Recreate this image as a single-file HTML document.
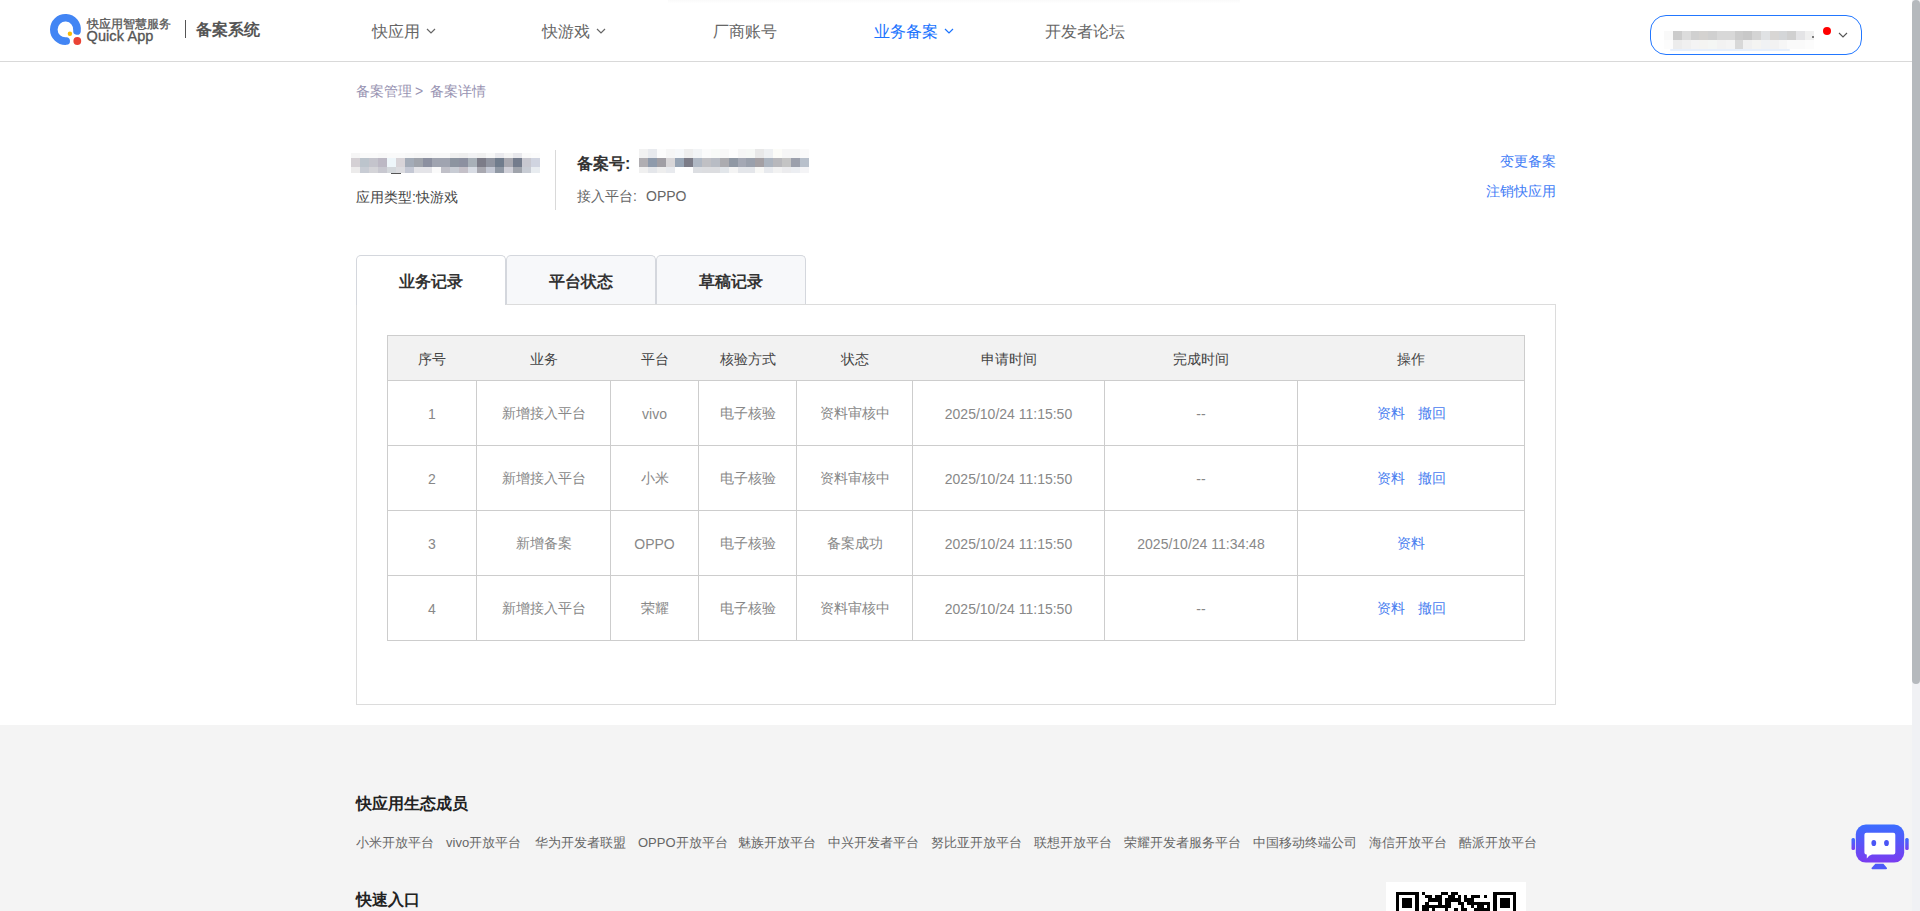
<!DOCTYPE html>
<html><head><meta charset="utf-8">
<style>
html,body{margin:0;padding:0;width:1920px;height:911px;overflow:hidden;background:#fff;font-family:"Liberation Sans",sans-serif;}
.a{position:absolute;white-space:nowrap;}
#hdr{position:absolute;left:0;top:0;width:1912px;height:61px;background:#fff;border-bottom:1px solid #d9d9d9;}
.nav{position:absolute;top:24px;font-size:16px;line-height:16px;color:#666;white-space:nowrap;}
.chev{position:absolute;}
.bc{font-size:14px;line-height:14px;color:#9893b2;}
.blk{position:absolute;}
.tab{position:absolute;top:255px;width:148px;height:48px;border:1px solid #d4d7dd;border-bottom:none;border-radius:5px 5px 0 0;background:#f7f8fa;font-size:16px;font-weight:bold;color:#333;text-align:center;}
.tab span{position:absolute;left:0;right:0;top:18px;line-height:16px;}
#panel{position:absolute;left:356px;top:304px;width:1198px;height:399px;border:1px solid #dcdcdc;background:#fff;}
table{position:absolute;left:387px;top:335px;border-collapse:collapse;table-layout:fixed;font-size:14px;}
td,th{border:1px solid #cdcdcd;text-align:center;padding:0;white-space:nowrap;}
th{height:41px;padding-top:3px;background:#f2f2f2;font-weight:normal;color:#444;border-left:none;border-right:none;}
th:first-child{border-left:1px solid #cdcdcd;}
th:last-child{border-right:1px solid #cdcdcd;}
td{height:62px;padding-top:2px;color:#888;}
td a{color:#4a80f0;text-decoration:none;}
#footer{position:absolute;left:0;top:725px;width:1912px;height:186px;background:#f4f4f4;}
.ft{font-size:16px;line-height:16px;font-weight:bold;color:#222;}
.lk{font-size:13px;line-height:13px;color:#666;}
</style></head><body>

<div id="hdr"></div>
<div class="a" style="left:668px;top:0;width:572px;height:3px;background:linear-gradient(#fafafa,#fefefe)"></div>
<!-- logo -->
<svg class="a" style="left:45px;top:9px" width="42" height="42" viewBox="0 0 42 42">
  <path d="M 32.0 21.9 A 11.65 11.65 0 1 0 21.2 32.05" fill="none" stroke="#4285f4" stroke-width="7.6" stroke-linecap="round"/>
  <circle cx="24.9" cy="24.8" r="2.2" fill="#fbbc05"/>
  <circle cx="32.3" cy="32" r="3.9" fill="#ea4335"/>
</svg>
<div class="a" style="left:87px;top:18px;font-size:12px;line-height:12px;color:#555;-webkit-text-stroke:0.3px #555">快应用智慧服务</div>
<div class="a" style="left:86.5px;top:29px;font-size:14.5px;line-height:15px;color:#555;letter-spacing:0.1px;-webkit-text-stroke:0.35px #555">Quick App</div>
<div class="a" style="left:185px;top:20px;width:1px;height:18px;background:#555"></div>
<div class="a" style="left:196px;top:22px;font-size:16px;line-height:16px;font-weight:bold;color:#555">备案系统</div>

<div class="nav" style="left:372px">快应用</div>
<svg class="a" style="left:426px;top:28px" width="10" height="6" viewBox="0 0 10 6"><path d="M1 1 L5 5 L9 1" fill="none" stroke="#666" stroke-width="1.2"/></svg>
<div class="nav" style="left:542px">快游戏</div>
<svg class="a" style="left:596px;top:28px" width="10" height="6" viewBox="0 0 10 6"><path d="M1 1 L5 5 L9 1" fill="none" stroke="#666" stroke-width="1.2"/></svg>
<div class="nav" style="left:713px">厂商账号</div>
<div class="nav" style="left:874px;color:#1a73fe">业务备案</div>
<svg class="a" style="left:944px;top:28px" width="10" height="6" viewBox="0 0 10 6"><path d="M1 1 L5 5 L9 1" fill="none" stroke="#1a73fe" stroke-width="1.2"/></svg>
<div class="nav" style="left:1045px">开发者论坛</div>

<!-- user box -->
<div class="a" style="left:1650px;top:15px;width:210px;height:38px;border:1px solid #2277ff;border-radius:16px;background:#fff"></div>
<div class="a" style="left:1664.2px;top:31.0px;width:9.0px;height:9.1px;background:#f9f9f9"></div><div class="a" style="left:1673.0px;top:31.0px;width:9.0px;height:9.1px;background:#cccccc"></div><div class="a" style="left:1681.8px;top:31.0px;width:9.0px;height:9.1px;background:#dcdcdc"></div><div class="a" style="left:1690.6px;top:31.0px;width:9.0px;height:9.1px;background:#d0d0d0"></div><div class="a" style="left:1699.4px;top:31.0px;width:9.0px;height:9.1px;background:#d4d2d0"></div><div class="a" style="left:1708.2px;top:31.0px;width:9.0px;height:9.1px;background:#d0d0d0"></div><div class="a" style="left:1717.0px;top:31.0px;width:9.0px;height:9.1px;background:#d8d8d8"></div><div class="a" style="left:1725.8px;top:31.0px;width:9.0px;height:9.1px;background:#d8d8d8"></div><div class="a" style="left:1734.6px;top:31.0px;width:9.0px;height:9.1px;background:#cccccc"></div><div class="a" style="left:1743.4px;top:31.0px;width:9.0px;height:9.1px;background:#c8c8c8"></div><div class="a" style="left:1752.2px;top:31.0px;width:9.0px;height:9.1px;background:#d4d4d4"></div><div class="a" style="left:1761.0px;top:31.0px;width:9.0px;height:9.1px;background:#e0e2e4"></div><div class="a" style="left:1769.8px;top:31.0px;width:9.0px;height:9.1px;background:#d8d6d4"></div><div class="a" style="left:1778.6px;top:31.0px;width:9.0px;height:9.1px;background:#d4d6d8"></div><div class="a" style="left:1787.4px;top:31.0px;width:9.0px;height:9.1px;background:#d0d0d0"></div><div class="a" style="left:1796.2px;top:31.0px;width:9.0px;height:9.1px;background:#e4e4e6"></div><div class="a" style="left:1805.0px;top:31.0px;width:9.0px;height:9.1px;background:#f0f0f0"></div><div class="a" style="left:1664.2px;top:39.9px;width:9.0px;height:9.0px;background:#fcfcfc"></div><div class="a" style="left:1673.0px;top:39.9px;width:9.0px;height:9.0px;background:#ececec"></div><div class="a" style="left:1681.8px;top:39.9px;width:9.0px;height:9.0px;background:#f0f0f0"></div><div class="a" style="left:1690.6px;top:39.9px;width:9.0px;height:9.0px;background:#f4f4f4"></div><div class="a" style="left:1699.4px;top:39.9px;width:9.0px;height:9.0px;background:#f4f4f2"></div><div class="a" style="left:1708.2px;top:39.9px;width:9.0px;height:9.0px;background:#f4f6f4"></div><div class="a" style="left:1717.0px;top:39.9px;width:9.0px;height:9.0px;background:#f2f2f2"></div><div class="a" style="left:1725.8px;top:39.9px;width:9.0px;height:9.0px;background:#f4f4f4"></div><div class="a" style="left:1734.6px;top:39.9px;width:9.0px;height:9.0px;background:#d8d8d8"></div><div class="a" style="left:1743.4px;top:39.9px;width:9.0px;height:9.0px;background:#f0f0f0"></div><div class="a" style="left:1752.2px;top:39.9px;width:9.0px;height:9.0px;background:#f4f4f2"></div><div class="a" style="left:1761.0px;top:39.9px;width:9.0px;height:9.0px;background:#f0f2f4"></div><div class="a" style="left:1769.8px;top:39.9px;width:9.0px;height:9.0px;background:#f2f2f2"></div><div class="a" style="left:1778.6px;top:39.9px;width:9.0px;height:9.0px;background:#f6f6f6"></div><div class="a" style="left:1787.4px;top:39.9px;width:9.0px;height:9.0px;background:#fafafa"></div><div class="a" style="left:1796.2px;top:39.9px;width:9.0px;height:9.0px;background:#fafafa"></div><div class="a" style="left:1805.0px;top:39.9px;width:9.0px;height:9.0px;background:#fcfcfc"></div><div class="a" style="left:1670px;top:48.8px;width:120px;height:2px;background:#e6effc;border-radius:1px"></div><div class="a" style="left:1812px;top:36px;width:2px;height:2px;background:#555;border-radius:1px"></div>
<div class="a" style="left:1823px;top:27px;width:8px;height:8px;border-radius:50%;background:#ff0000"></div>
<svg class="a" style="left:1838px;top:32px" width="10" height="6" viewBox="0 0 10 6"><path d="M1 1 L5 5 L9 1" fill="none" stroke="#555" stroke-width="1.1"/></svg>

<!-- breadcrumb -->
<div class="a bc" style="left:356px;top:84px">备案管理</div><div class="a bc" style="left:415px;top:84px">&gt;</div><div class="a bc" style="left:430px;top:84px">备案详情</div>

<!-- info -->
<div class="a" style="left:0;top:0;"><div class="a" style="left:351.0px;top:153.2px;width:9.2px;height:4.8px;background:#f6f6f6"></div><div class="a" style="left:360.0px;top:153.2px;width:9.2px;height:4.8px;background:#fafafa"></div><div class="a" style="left:369.0px;top:153.2px;width:9.2px;height:4.8px;background:#fafafa"></div><div class="a" style="left:378.0px;top:153.2px;width:9.2px;height:4.8px;background:#f8f8f8"></div><div class="a" style="left:387.0px;top:153.2px;width:9.2px;height:4.8px;background:#fafafa"></div><div class="a" style="left:396.0px;top:153.2px;width:9.2px;height:4.8px;background:#fafafa"></div><div class="a" style="left:405.0px;top:153.2px;width:9.2px;height:4.8px;background:#f8f8f8"></div><div class="a" style="left:414.0px;top:153.2px;width:9.2px;height:4.8px;background:#f6f6f6"></div><div class="a" style="left:423.0px;top:153.2px;width:9.2px;height:4.8px;background:#f6f6f6"></div><div class="a" style="left:432.0px;top:153.2px;width:9.2px;height:4.8px;background:#f8f8f8"></div><div class="a" style="left:441.0px;top:153.2px;width:9.2px;height:4.8px;background:#f8f8f8"></div><div class="a" style="left:450.0px;top:153.2px;width:9.2px;height:4.8px;background:#f0f0f0"></div><div class="a" style="left:459.0px;top:153.2px;width:9.2px;height:4.8px;background:#eeeeee"></div><div class="a" style="left:468.0px;top:153.2px;width:9.2px;height:4.8px;background:#f2f2f4"></div><div class="a" style="left:477.0px;top:153.2px;width:9.2px;height:4.8px;background:#f0f0f0"></div><div class="a" style="left:486.0px;top:153.2px;width:9.2px;height:4.8px;background:#f8f8f8"></div><div class="a" style="left:495.0px;top:153.2px;width:9.2px;height:4.8px;background:#eaeaee"></div><div class="a" style="left:504.0px;top:153.2px;width:9.2px;height:4.8px;background:#f4f4f4"></div><div class="a" style="left:513.0px;top:153.2px;width:9.2px;height:4.8px;background:#e8e8ec"></div><div class="a" style="left:522.0px;top:153.2px;width:9.2px;height:4.8px;background:#fafafa"></div><div class="a" style="left:531.0px;top:153.2px;width:9.2px;height:4.8px;background:#fcfcfc"></div><div class="a" style="left:351.0px;top:157.8px;width:9.2px;height:9.3px;background:#d4d0d4"></div><div class="a" style="left:360.0px;top:157.8px;width:9.2px;height:9.3px;background:#bcc4cc"></div><div class="a" style="left:369.0px;top:157.8px;width:9.2px;height:9.3px;background:#c4c4cc"></div><div class="a" style="left:378.0px;top:157.8px;width:9.2px;height:9.3px;background:#bcb8c4"></div><div class="a" style="left:387.0px;top:157.8px;width:9.2px;height:9.3px;background:#eef6fa"></div><div class="a" style="left:396.0px;top:157.8px;width:9.2px;height:9.3px;background:#d8d4d8"></div><div class="a" style="left:405.0px;top:157.8px;width:9.2px;height:9.3px;background:#a4acb8"></div><div class="a" style="left:414.0px;top:157.8px;width:9.2px;height:9.3px;background:#a0a4ac"></div><div class="a" style="left:423.0px;top:157.8px;width:9.2px;height:9.3px;background:#8c90a0"></div><div class="a" style="left:432.0px;top:157.8px;width:9.2px;height:9.3px;background:#a0a4b0"></div><div class="a" style="left:441.0px;top:157.8px;width:9.2px;height:9.3px;background:#a0a4b0"></div><div class="a" style="left:450.0px;top:157.8px;width:9.2px;height:9.3px;background:#8c94a0"></div><div class="a" style="left:459.0px;top:157.8px;width:9.2px;height:9.3px;background:#8c90a0"></div><div class="a" style="left:468.0px;top:157.8px;width:9.2px;height:9.3px;background:#a8b0b8"></div><div class="a" style="left:477.0px;top:157.8px;width:9.2px;height:9.3px;background:#7c7c88"></div><div class="a" style="left:486.0px;top:157.8px;width:9.2px;height:9.3px;background:#9094a0"></div><div class="a" style="left:495.0px;top:157.8px;width:9.2px;height:9.3px;background:#707c8c"></div><div class="a" style="left:504.0px;top:157.8px;width:9.2px;height:9.3px;background:#a8a8b0"></div><div class="a" style="left:513.0px;top:157.8px;width:9.2px;height:9.3px;background:#747c8c"></div><div class="a" style="left:522.0px;top:157.8px;width:9.2px;height:9.3px;background:#c8c8d0"></div><div class="a" style="left:531.0px;top:157.8px;width:9.2px;height:9.3px;background:#d0d4e0"></div><div class="a" style="left:351.0px;top:166.9px;width:9.2px;height:6.5px;background:#ecebeb"></div><div class="a" style="left:360.0px;top:166.9px;width:9.2px;height:6.5px;background:#c8ccd4"></div><div class="a" style="left:369.0px;top:166.9px;width:9.2px;height:6.5px;background:#d4d4d8"></div><div class="a" style="left:378.0px;top:166.9px;width:9.2px;height:6.5px;background:#c8c8d0"></div><div class="a" style="left:387.0px;top:166.9px;width:9.2px;height:6.5px;background:#d4d8dc"></div><div class="a" style="left:396.0px;top:166.9px;width:9.2px;height:6.5px;background:#dcdce0"></div><div class="a" style="left:405.0px;top:166.9px;width:9.2px;height:6.5px;background:#c4c8d4"></div><div class="a" style="left:414.0px;top:166.9px;width:9.2px;height:6.5px;background:#e4e4e8"></div><div class="a" style="left:423.0px;top:166.9px;width:9.2px;height:6.5px;background:#e4e4e8"></div><div class="a" style="left:432.0px;top:166.9px;width:9.2px;height:6.5px;background:#fafafa"></div><div class="a" style="left:441.0px;top:166.9px;width:9.2px;height:6.5px;background:#c0c0c8"></div><div class="a" style="left:450.0px;top:166.9px;width:9.2px;height:6.5px;background:#c8ccd4"></div><div class="a" style="left:459.0px;top:166.9px;width:9.2px;height:6.5px;background:#c4c0c8"></div><div class="a" style="left:468.0px;top:166.9px;width:9.2px;height:6.5px;background:#d8dce4"></div><div class="a" style="left:477.0px;top:166.9px;width:9.2px;height:6.5px;background:#a8a8b0"></div><div class="a" style="left:486.0px;top:166.9px;width:9.2px;height:6.5px;background:#c4c8d4"></div><div class="a" style="left:495.0px;top:166.9px;width:9.2px;height:6.5px;background:#9098a4"></div><div class="a" style="left:504.0px;top:166.9px;width:9.2px;height:6.5px;background:#d0d0d8"></div><div class="a" style="left:513.0px;top:166.9px;width:9.2px;height:6.5px;background:#a0a4ac"></div><div class="a" style="left:522.0px;top:166.9px;width:9.2px;height:6.5px;background:#c8ccd4"></div><div class="a" style="left:531.0px;top:166.9px;width:9.2px;height:6.5px;background:#e8ecf0"></div><div class="a" style="left:391px;top:173.2px;width:10px;height:1px;background:#555"></div></div>
<div class="a" style="left:356px;top:190px;font-size:14px;line-height:14px;color:#444">应用类型:快游戏</div>
<div class="a" style="left:555px;top:150px;width:1px;height:60px;background:#d9d9d9"></div>
<div class="a" style="left:577px;top:156px;font-size:16px;line-height:16px;font-weight:bold;color:#333">备案号:</div>
<div class="a" style="left:639.0px;top:149.2px;width:9.1px;height:9.1px;background:#f2f2f2"></div><div class="a" style="left:648.0px;top:149.2px;width:9.1px;height:9.1px;background:#e8eaee"></div><div class="a" style="left:656.9px;top:149.2px;width:9.1px;height:9.1px;background:#fcfcfc"></div><div class="a" style="left:665.9px;top:149.2px;width:9.1px;height:9.1px;background:#f6f6f6"></div><div class="a" style="left:674.8px;top:149.2px;width:9.1px;height:9.1px;background:#f6f8fa"></div><div class="a" style="left:683.8px;top:149.2px;width:9.1px;height:9.1px;background:#eeeeee"></div><div class="a" style="left:692.7px;top:149.2px;width:9.1px;height:9.1px;background:#f2f4f6"></div><div class="a" style="left:701.7px;top:149.2px;width:9.1px;height:9.1px;background:#fbfbfb"></div><div class="a" style="left:710.6px;top:149.2px;width:9.1px;height:9.1px;background:#f8faf8"></div><div class="a" style="left:719.6px;top:149.2px;width:9.1px;height:9.1px;background:#f8f8f8"></div><div class="a" style="left:728.5px;top:149.2px;width:9.1px;height:9.1px;background:#fdfdfd"></div><div class="a" style="left:737.5px;top:149.2px;width:9.1px;height:9.1px;background:#f6f6f6"></div><div class="a" style="left:746.4px;top:149.2px;width:9.1px;height:9.1px;background:#f6f8f6"></div><div class="a" style="left:755.4px;top:149.2px;width:9.1px;height:9.1px;background:#e8e8e8"></div><div class="a" style="left:764.3px;top:149.2px;width:9.1px;height:9.1px;background:#eef0f2"></div><div class="a" style="left:773.3px;top:149.2px;width:9.1px;height:9.1px;background:#fcfcf8"></div><div class="a" style="left:782.2px;top:149.2px;width:9.1px;height:9.1px;background:#f6f6f6"></div><div class="a" style="left:791.2px;top:149.2px;width:9.1px;height:9.1px;background:#f6f6f6"></div><div class="a" style="left:800.1px;top:149.2px;width:9.1px;height:9.1px;background:#fafafa"></div><div class="a" style="left:639.0px;top:158.1px;width:9.1px;height:9.1px;background:#b0aeb2"></div><div class="a" style="left:648.0px;top:158.1px;width:9.1px;height:9.1px;background:#8e9aab"></div><div class="a" style="left:656.9px;top:158.1px;width:9.1px;height:9.1px;background:#a09ea4"></div><div class="a" style="left:665.9px;top:158.1px;width:9.1px;height:9.1px;background:#d8d6d8"></div><div class="a" style="left:674.8px;top:158.1px;width:9.1px;height:9.1px;background:#97a4b4"></div><div class="a" style="left:683.8px;top:158.1px;width:9.1px;height:9.1px;background:#7c7c88"></div><div class="a" style="left:692.7px;top:158.1px;width:9.1px;height:9.1px;background:#b0b8c4"></div><div class="a" style="left:701.7px;top:158.1px;width:9.1px;height:9.1px;background:#c0c0c4"></div><div class="a" style="left:710.6px;top:158.1px;width:9.1px;height:9.1px;background:#b8bcc4"></div><div class="a" style="left:719.6px;top:158.1px;width:9.1px;height:9.1px;background:#acacb0"></div><div class="a" style="left:728.5px;top:158.1px;width:9.1px;height:9.1px;background:#9098a4"></div><div class="a" style="left:737.5px;top:158.1px;width:9.1px;height:9.1px;background:#a4a8b4"></div><div class="a" style="left:746.4px;top:158.1px;width:9.1px;height:9.1px;background:#9aa0ac"></div><div class="a" style="left:755.4px;top:158.1px;width:9.1px;height:9.1px;background:#a4a0a4"></div><div class="a" style="left:764.3px;top:158.1px;width:9.1px;height:9.1px;background:#acb4bf"></div><div class="a" style="left:773.3px;top:158.1px;width:9.1px;height:9.1px;background:#b8b8bc"></div><div class="a" style="left:782.2px;top:158.1px;width:9.1px;height:9.1px;background:#c4c4c4"></div><div class="a" style="left:791.2px;top:158.1px;width:9.1px;height:9.1px;background:#9ca0ac"></div><div class="a" style="left:800.1px;top:158.1px;width:9.1px;height:9.1px;background:#b8c0cb"></div><div class="a" style="left:639.0px;top:167.0px;width:9.1px;height:5.8px;background:#f0f0f0"></div><div class="a" style="left:648.0px;top:167.0px;width:9.1px;height:5.8px;background:#e4e6ea"></div><div class="a" style="left:656.9px;top:167.0px;width:9.1px;height:5.8px;background:#eeeeee"></div><div class="a" style="left:665.9px;top:167.0px;width:9.1px;height:5.8px;background:#e8eaee"></div><div class="a" style="left:674.8px;top:167.0px;width:9.1px;height:5.8px;background:#ffffff"></div><div class="a" style="left:683.8px;top:167.0px;width:9.1px;height:5.8px;background:#ffffff"></div><div class="a" style="left:692.7px;top:167.0px;width:9.1px;height:5.8px;background:#dcdee2"></div><div class="a" style="left:701.7px;top:167.0px;width:9.1px;height:5.8px;background:#dcdde0"></div><div class="a" style="left:710.6px;top:167.0px;width:9.1px;height:5.8px;background:#dcdde0"></div><div class="a" style="left:719.6px;top:167.0px;width:9.1px;height:5.8px;background:#e2e6ea"></div><div class="a" style="left:728.5px;top:167.0px;width:9.1px;height:5.8px;background:#f4f4f4"></div><div class="a" style="left:737.5px;top:167.0px;width:9.1px;height:5.8px;background:#e4e6ea"></div><div class="a" style="left:746.4px;top:167.0px;width:9.1px;height:5.8px;background:#e4e6ea"></div><div class="a" style="left:755.4px;top:167.0px;width:9.1px;height:5.8px;background:#f8f8f6"></div><div class="a" style="left:764.3px;top:167.0px;width:9.1px;height:5.8px;background:#e8eaee"></div><div class="a" style="left:773.3px;top:167.0px;width:9.1px;height:5.8px;background:#f2f2f2"></div><div class="a" style="left:782.2px;top:167.0px;width:9.1px;height:5.8px;background:#ececee"></div><div class="a" style="left:791.2px;top:167.0px;width:9.1px;height:5.8px;background:#eceef2"></div><div class="a" style="left:800.1px;top:167.0px;width:9.1px;height:5.8px;background:#f4f4f6"></div>
<div class="a" style="left:577px;top:189px;font-size:14px;line-height:14px;color:#666">接入平台:</div><div class="a" style="left:646px;top:189px;font-size:14px;line-height:14px;color:#666">OPPO</div>
<div class="a" style="left:1500px;top:154px;width:56px;text-align:right;font-size:14px;line-height:14px;color:#3f7cf6">变更备案</div>
<div class="a" style="left:1476px;top:184px;width:80px;text-align:right;font-size:14px;line-height:14px;color:#3f7cf6">注销快应用</div>

<!-- panel & tabs -->
<div id="panel"></div>
<div class="tab" style="left:356px;background:#fff;height:49px"><span>业务记录</span></div>
<div class="tab" style="left:506px"><span>平台状态</span></div>
<div class="tab" style="left:656px"><span>草稿记录</span></div>

<table>
<colgroup><col style="width:89px"><col style="width:134px"><col style="width:88px"><col style="width:98px"><col style="width:116px"><col style="width:192px"><col style="width:193px"><col style="width:227px"></colgroup>
<tr><th>序号</th><th>业务</th><th>平台</th><th>核验方式</th><th>状态</th><th>申请时间</th><th>完成时间</th><th>操作</th></tr>
<tr><td>1</td><td>新增接入平台</td><td>vivo</td><td>电子核验</td><td>资料审核中</td><td>2025/10/24 11:15:50</td><td>--</td><td><a>资料</a><a style="margin-left:13px">撤回</a></td></tr>
<tr><td>2</td><td>新增接入平台</td><td>小米</td><td>电子核验</td><td>资料审核中</td><td>2025/10/24 11:15:50</td><td>--</td><td><a>资料</a><a style="margin-left:13px">撤回</a></td></tr>
<tr><td>3</td><td>新增备案</td><td>OPPO</td><td>电子核验</td><td>备案成功</td><td>2025/10/24 11:15:50</td><td>2025/10/24 11:34:48</td><td><a>资料</a></td></tr>
<tr><td>4</td><td>新增接入平台</td><td>荣耀</td><td>电子核验</td><td>资料审核中</td><td>2025/10/24 11:15:50</td><td>--</td><td><a>资料</a><a style="margin-left:13px">撤回</a></td></tr>
</table>

<!-- footer -->
<div id="footer"></div>
<div class="a ft" style="left:356px;top:796px">快应用生态成员</div>
<div class="a lk" style="left:356px;top:836px">小米开放平台</div>
<div class="a lk" style="left:446px;top:836px">vivo开放平台</div>
<div class="a lk" style="left:535px;top:836px">华为开发者联盟</div>
<div class="a lk" style="left:638px;top:836px">OPPO开放平台</div>
<div class="a lk" style="left:738px;top:836px">魅族开放平台</div>
<div class="a lk" style="left:828px;top:836px">中兴开发者平台</div>
<div class="a lk" style="left:931px;top:836px">努比亚开放平台</div>
<div class="a lk" style="left:1034px;top:836px">联想开放平台</div>
<div class="a lk" style="left:1124px;top:836px">荣耀开发者服务平台</div>
<div class="a lk" style="left:1253px;top:836px">中国移动终端公司</div>
<div class="a lk" style="left:1369px;top:836px">海信开放平台</div>
<div class="a lk" style="left:1459px;top:836px">酷派开放平台</div>
<div class="a ft" style="left:356px;top:892px">快速入口</div>

<!-- QR -->
<div class="a" style="left:1386px;top:882px;width:140px;height:29px;background:#fff;overflow:hidden"><div class="a" style="left:10.00px;top:9.80px;width:3.39px;height:3.39px;background:#000"></div><div class="a" style="left:13.24px;top:9.80px;width:3.39px;height:3.39px;background:#000"></div><div class="a" style="left:16.49px;top:9.80px;width:3.39px;height:3.39px;background:#000"></div><div class="a" style="left:19.73px;top:9.80px;width:3.39px;height:3.39px;background:#000"></div><div class="a" style="left:22.97px;top:9.80px;width:3.39px;height:3.39px;background:#000"></div><div class="a" style="left:26.22px;top:9.80px;width:3.39px;height:3.39px;background:#000"></div><div class="a" style="left:29.46px;top:9.80px;width:3.39px;height:3.39px;background:#000"></div><div class="a" style="left:35.95px;top:9.80px;width:3.39px;height:3.39px;background:#000"></div><div class="a" style="left:55.41px;top:9.80px;width:3.39px;height:3.39px;background:#000"></div><div class="a" style="left:58.65px;top:9.80px;width:3.39px;height:3.39px;background:#000"></div><div class="a" style="left:65.14px;top:9.80px;width:3.39px;height:3.39px;background:#000"></div><div class="a" style="left:68.38px;top:9.80px;width:3.39px;height:3.39px;background:#000"></div><div class="a" style="left:107.30px;top:9.80px;width:3.39px;height:3.39px;background:#000"></div><div class="a" style="left:110.54px;top:9.80px;width:3.39px;height:3.39px;background:#000"></div><div class="a" style="left:113.78px;top:9.80px;width:3.39px;height:3.39px;background:#000"></div><div class="a" style="left:117.03px;top:9.80px;width:3.39px;height:3.39px;background:#000"></div><div class="a" style="left:120.27px;top:9.80px;width:3.39px;height:3.39px;background:#000"></div><div class="a" style="left:123.51px;top:9.80px;width:3.39px;height:3.39px;background:#000"></div><div class="a" style="left:126.76px;top:9.80px;width:3.39px;height:3.39px;background:#000"></div><div class="a" style="left:10.00px;top:13.04px;width:3.39px;height:3.39px;background:#000"></div><div class="a" style="left:29.46px;top:13.04px;width:3.39px;height:3.39px;background:#000"></div><div class="a" style="left:39.19px;top:13.04px;width:3.39px;height:3.39px;background:#000"></div><div class="a" style="left:42.43px;top:13.04px;width:3.39px;height:3.39px;background:#000"></div><div class="a" style="left:48.92px;top:13.04px;width:3.39px;height:3.39px;background:#000"></div><div class="a" style="left:52.16px;top:13.04px;width:3.39px;height:3.39px;background:#000"></div><div class="a" style="left:61.89px;top:13.04px;width:3.39px;height:3.39px;background:#000"></div><div class="a" style="left:65.14px;top:13.04px;width:3.39px;height:3.39px;background:#000"></div><div class="a" style="left:71.62px;top:13.04px;width:3.39px;height:3.39px;background:#000"></div><div class="a" style="left:78.11px;top:13.04px;width:3.39px;height:3.39px;background:#000"></div><div class="a" style="left:84.59px;top:13.04px;width:3.39px;height:3.39px;background:#000"></div><div class="a" style="left:87.84px;top:13.04px;width:3.39px;height:3.39px;background:#000"></div><div class="a" style="left:91.08px;top:13.04px;width:3.39px;height:3.39px;background:#000"></div><div class="a" style="left:97.57px;top:13.04px;width:3.39px;height:3.39px;background:#000"></div><div class="a" style="left:107.30px;top:13.04px;width:3.39px;height:3.39px;background:#000"></div><div class="a" style="left:126.76px;top:13.04px;width:3.39px;height:3.39px;background:#000"></div><div class="a" style="left:10.00px;top:16.29px;width:3.39px;height:3.39px;background:#000"></div><div class="a" style="left:16.49px;top:16.29px;width:3.39px;height:3.39px;background:#000"></div><div class="a" style="left:19.73px;top:16.29px;width:3.39px;height:3.39px;background:#000"></div><div class="a" style="left:22.97px;top:16.29px;width:3.39px;height:3.39px;background:#000"></div><div class="a" style="left:29.46px;top:16.29px;width:3.39px;height:3.39px;background:#000"></div><div class="a" style="left:42.43px;top:16.29px;width:3.39px;height:3.39px;background:#000"></div><div class="a" style="left:45.68px;top:16.29px;width:3.39px;height:3.39px;background:#000"></div><div class="a" style="left:48.92px;top:16.29px;width:3.39px;height:3.39px;background:#000"></div><div class="a" style="left:52.16px;top:16.29px;width:3.39px;height:3.39px;background:#000"></div><div class="a" style="left:58.65px;top:16.29px;width:3.39px;height:3.39px;background:#000"></div><div class="a" style="left:61.89px;top:16.29px;width:3.39px;height:3.39px;background:#000"></div><div class="a" style="left:65.14px;top:16.29px;width:3.39px;height:3.39px;background:#000"></div><div class="a" style="left:68.38px;top:16.29px;width:3.39px;height:3.39px;background:#000"></div><div class="a" style="left:71.62px;top:16.29px;width:3.39px;height:3.39px;background:#000"></div><div class="a" style="left:78.11px;top:16.29px;width:3.39px;height:3.39px;background:#000"></div><div class="a" style="left:81.35px;top:16.29px;width:3.39px;height:3.39px;background:#000"></div><div class="a" style="left:84.59px;top:16.29px;width:3.39px;height:3.39px;background:#000"></div><div class="a" style="left:107.30px;top:16.29px;width:3.39px;height:3.39px;background:#000"></div><div class="a" style="left:113.78px;top:16.29px;width:3.39px;height:3.39px;background:#000"></div><div class="a" style="left:117.03px;top:16.29px;width:3.39px;height:3.39px;background:#000"></div><div class="a" style="left:120.27px;top:16.29px;width:3.39px;height:3.39px;background:#000"></div><div class="a" style="left:126.76px;top:16.29px;width:3.39px;height:3.39px;background:#000"></div><div class="a" style="left:10.00px;top:19.53px;width:3.39px;height:3.39px;background:#000"></div><div class="a" style="left:16.49px;top:19.53px;width:3.39px;height:3.39px;background:#000"></div><div class="a" style="left:19.73px;top:19.53px;width:3.39px;height:3.39px;background:#000"></div><div class="a" style="left:22.97px;top:19.53px;width:3.39px;height:3.39px;background:#000"></div><div class="a" style="left:29.46px;top:19.53px;width:3.39px;height:3.39px;background:#000"></div><div class="a" style="left:39.19px;top:19.53px;width:3.39px;height:3.39px;background:#000"></div><div class="a" style="left:52.16px;top:19.53px;width:3.39px;height:3.39px;background:#000"></div><div class="a" style="left:58.65px;top:19.53px;width:3.39px;height:3.39px;background:#000"></div><div class="a" style="left:61.89px;top:19.53px;width:3.39px;height:3.39px;background:#000"></div><div class="a" style="left:71.62px;top:19.53px;width:3.39px;height:3.39px;background:#000"></div><div class="a" style="left:74.86px;top:19.53px;width:3.39px;height:3.39px;background:#000"></div><div class="a" style="left:81.35px;top:19.53px;width:3.39px;height:3.39px;background:#000"></div><div class="a" style="left:84.59px;top:19.53px;width:3.39px;height:3.39px;background:#000"></div><div class="a" style="left:87.84px;top:19.53px;width:3.39px;height:3.39px;background:#000"></div><div class="a" style="left:91.08px;top:19.53px;width:3.39px;height:3.39px;background:#000"></div><div class="a" style="left:94.32px;top:19.53px;width:3.39px;height:3.39px;background:#000"></div><div class="a" style="left:97.57px;top:19.53px;width:3.39px;height:3.39px;background:#000"></div><div class="a" style="left:100.81px;top:19.53px;width:3.39px;height:3.39px;background:#000"></div><div class="a" style="left:107.30px;top:19.53px;width:3.39px;height:3.39px;background:#000"></div><div class="a" style="left:113.78px;top:19.53px;width:3.39px;height:3.39px;background:#000"></div><div class="a" style="left:117.03px;top:19.53px;width:3.39px;height:3.39px;background:#000"></div><div class="a" style="left:120.27px;top:19.53px;width:3.39px;height:3.39px;background:#000"></div><div class="a" style="left:126.76px;top:19.53px;width:3.39px;height:3.39px;background:#000"></div><div class="a" style="left:10.00px;top:22.77px;width:3.39px;height:3.39px;background:#000"></div><div class="a" style="left:16.49px;top:22.77px;width:3.39px;height:3.39px;background:#000"></div><div class="a" style="left:19.73px;top:22.77px;width:3.39px;height:3.39px;background:#000"></div><div class="a" style="left:22.97px;top:22.77px;width:3.39px;height:3.39px;background:#000"></div><div class="a" style="left:29.46px;top:22.77px;width:3.39px;height:3.39px;background:#000"></div><div class="a" style="left:35.95px;top:22.77px;width:3.39px;height:3.39px;background:#000"></div><div class="a" style="left:39.19px;top:22.77px;width:3.39px;height:3.39px;background:#000"></div><div class="a" style="left:42.43px;top:22.77px;width:3.39px;height:3.39px;background:#000"></div><div class="a" style="left:45.68px;top:22.77px;width:3.39px;height:3.39px;background:#000"></div><div class="a" style="left:48.92px;top:22.77px;width:3.39px;height:3.39px;background:#000"></div><div class="a" style="left:52.16px;top:22.77px;width:3.39px;height:3.39px;background:#000"></div><div class="a" style="left:55.41px;top:22.77px;width:3.39px;height:3.39px;background:#000"></div><div class="a" style="left:58.65px;top:22.77px;width:3.39px;height:3.39px;background:#000"></div><div class="a" style="left:61.89px;top:22.77px;width:3.39px;height:3.39px;background:#000"></div><div class="a" style="left:74.86px;top:22.77px;width:3.39px;height:3.39px;background:#000"></div><div class="a" style="left:84.59px;top:22.77px;width:3.39px;height:3.39px;background:#000"></div><div class="a" style="left:91.08px;top:22.77px;width:3.39px;height:3.39px;background:#000"></div><div class="a" style="left:94.32px;top:22.77px;width:3.39px;height:3.39px;background:#000"></div><div class="a" style="left:100.81px;top:22.77px;width:3.39px;height:3.39px;background:#000"></div><div class="a" style="left:107.30px;top:22.77px;width:3.39px;height:3.39px;background:#000"></div><div class="a" style="left:113.78px;top:22.77px;width:3.39px;height:3.39px;background:#000"></div><div class="a" style="left:117.03px;top:22.77px;width:3.39px;height:3.39px;background:#000"></div><div class="a" style="left:120.27px;top:22.77px;width:3.39px;height:3.39px;background:#000"></div><div class="a" style="left:126.76px;top:22.77px;width:3.39px;height:3.39px;background:#000"></div><div class="a" style="left:10.00px;top:26.02px;width:3.39px;height:3.39px;background:#000"></div><div class="a" style="left:29.46px;top:26.02px;width:3.39px;height:3.39px;background:#000"></div><div class="a" style="left:35.95px;top:26.02px;width:3.39px;height:3.39px;background:#000"></div><div class="a" style="left:39.19px;top:26.02px;width:3.39px;height:3.39px;background:#000"></div><div class="a" style="left:45.68px;top:26.02px;width:3.39px;height:3.39px;background:#000"></div><div class="a" style="left:58.65px;top:26.02px;width:3.39px;height:3.39px;background:#000"></div><div class="a" style="left:68.38px;top:26.02px;width:3.39px;height:3.39px;background:#000"></div><div class="a" style="left:74.86px;top:26.02px;width:3.39px;height:3.39px;background:#000"></div><div class="a" style="left:78.11px;top:26.02px;width:3.39px;height:3.39px;background:#000"></div><div class="a" style="left:87.84px;top:26.02px;width:3.39px;height:3.39px;background:#000"></div><div class="a" style="left:91.08px;top:26.02px;width:3.39px;height:3.39px;background:#000"></div><div class="a" style="left:94.32px;top:26.02px;width:3.39px;height:3.39px;background:#000"></div><div class="a" style="left:97.57px;top:26.02px;width:3.39px;height:3.39px;background:#000"></div><div class="a" style="left:100.81px;top:26.02px;width:3.39px;height:3.39px;background:#000"></div><div class="a" style="left:107.30px;top:26.02px;width:3.39px;height:3.39px;background:#000"></div><div class="a" style="left:126.76px;top:26.02px;width:3.39px;height:3.39px;background:#000"></div></div>

<!-- bot -->
<svg class="a" style="left:1850px;top:822px" width="62" height="50" viewBox="0 0 62 50">
  <defs><linearGradient id="bg" x1="0" y1="0" x2="0" y2="1"><stop offset="0" stop-color="#3a6dff"/><stop offset="1" stop-color="#7a3cf0"/></linearGradient></defs>
  <rect x="1.5" y="16" width="3.5" height="12" rx="1.5" fill="url(#bg)"/>
  <rect x="55.2" y="16" width="3.5" height="12" rx="1.5" fill="url(#bg)"/>
  <rect x="5.8" y="2.6" width="48.4" height="38" rx="10" fill="url(#bg)"/>
  <path d="M16.4 10.7 H43.3 a2 2 0 0 1 2 2 V30.6 a2 2 0 0 1 -2 2 H22 Q19 33 16.8 36.4 L16.8 32.6 H16.4 a2 2 0 0 1 -2 -2 V12.7 a2 2 0 0 1 2 -2 Z" fill="#fff"/>
  <ellipse cx="23.8" cy="21" rx="2.4" ry="3.1" fill="#4a55f6"/>
  <ellipse cx="36.5" cy="21" rx="2.4" ry="3.1" fill="#4a55f6"/>
  <path d="M25.4 41.8 H33.4 L37 46 a1 1 0 0 1 -0.8 1.2 H22.3 a1 1 0 0 1 -0.8 -1.2 Z" fill="#4e5af8"/>
</svg>

<!-- scrollbar -->
<div class="a" style="left:1912px;top:0;width:8px;height:911px;background:#f0f1f4"></div>
<div class="a" style="left:1912px;top:0;width:8px;height:684px;background:#b5b9bd;border-radius:4px"></div>

</body></html>
